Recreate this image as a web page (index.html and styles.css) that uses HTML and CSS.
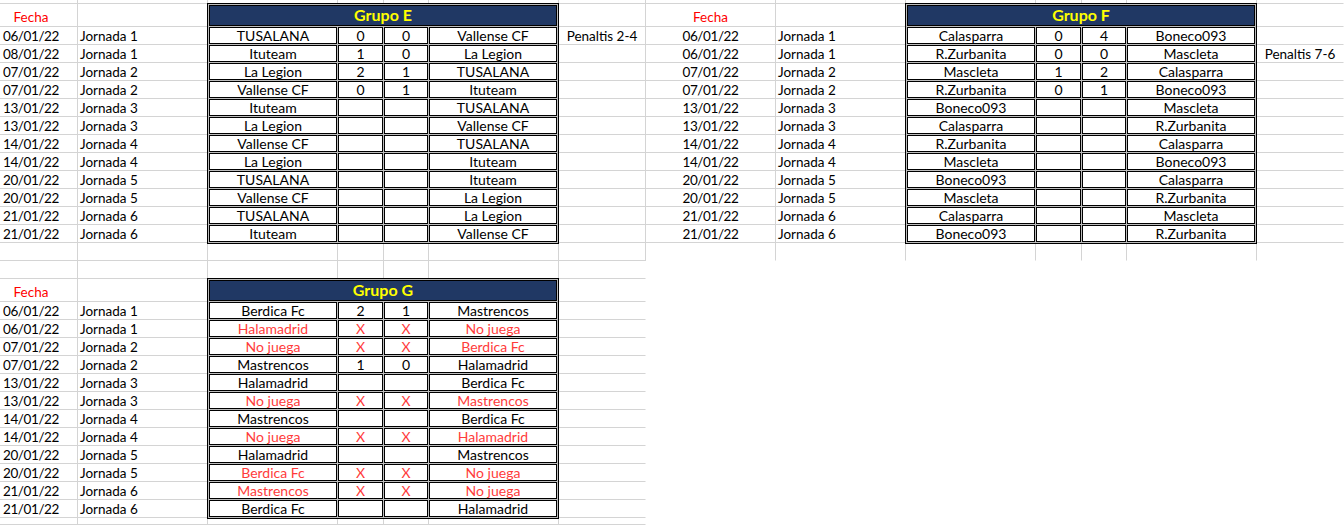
FILE: index.html
```html
<!DOCTYPE html>
<html lang="es">
<head>
<meta charset="utf-8">
<title>Grupos</title>
<link rel="stylesheet" href="styles.css">
</head>
<body>
<div class="page">
  <div class="panel left">
    <!-- row 1 (partial) -->
    <div class="cell"></div><div class="cell"></div><div class="cell"></div><div class="cell"></div><div class="cell"></div><div class="cell"></div><div class="cell"></div>
    <!-- row 2 header -->
    <div class="cell fh off">Fecha</div><div class="cell"></div><div class="cell"></div>
    <!-- rows 3-14 -->
    <div class="cell d off">06/01/22</div><div class="cell j">Jornada 1</div><div class="cell pen">Penaltis 2-4</div>
    <div class="cell d off">08/01/22</div><div class="cell j">Jornada 1</div><div class="cell"></div>
    <div class="cell d off">07/01/22</div><div class="cell j">Jornada 2</div><div class="cell"></div>
    <div class="cell d off">07/01/22</div><div class="cell j">Jornada 2</div><div class="cell"></div>
    <div class="cell d off">13/01/22</div><div class="cell j">Jornada 3</div><div class="cell"></div>
    <div class="cell d off">13/01/22</div><div class="cell j">Jornada 3</div><div class="cell"></div>
    <div class="cell d off">14/01/22</div><div class="cell j">Jornada 4</div><div class="cell"></div>
    <div class="cell d off">14/01/22</div><div class="cell j">Jornada 4</div><div class="cell"></div>
    <div class="cell d off">20/01/22</div><div class="cell j">Jornada 5</div><div class="cell"></div>
    <div class="cell d off">20/01/22</div><div class="cell j">Jornada 5</div><div class="cell"></div>
    <div class="cell d off">21/01/22</div><div class="cell j">Jornada 6</div><div class="cell"></div>
    <div class="cell d off">21/01/22</div><div class="cell j">Jornada 6</div><div class="cell"></div>
    <!-- row 15 -->
    <div class="cell"></div><div class="cell"></div><div class="cell"></div><div class="cell"></div><div class="cell"></div><div class="cell"></div><div class="cell"></div>
    <!-- row 16 -->
    <div class="cell"></div><div class="cell"></div><div class="cell"></div><div class="cell"></div><div class="cell"></div><div class="cell"></div><div class="cell nr"></div>
    <!-- row 17 header -->
    <div class="cell fh off">Fecha</div><div class="cell"></div><div class="cell nr"></div>
    <!-- rows 18-29 -->
    <div class="cell d off">06/01/22</div><div class="cell j">Jornada 1</div><div class="cell nr"></div>
    <div class="cell d off">06/01/22</div><div class="cell j">Jornada 1</div><div class="cell nr"></div>
    <div class="cell d off">07/01/22</div><div class="cell j">Jornada 2</div><div class="cell nr"></div>
    <div class="cell d off">07/01/22</div><div class="cell j">Jornada 2</div><div class="cell nr"></div>
    <div class="cell d off">13/01/22</div><div class="cell j">Jornada 3</div><div class="cell nr"></div>
    <div class="cell d off">13/01/22</div><div class="cell j">Jornada 3</div><div class="cell nr"></div>
    <div class="cell d off">14/01/22</div><div class="cell j">Jornada 4</div><div class="cell nr"></div>
    <div class="cell d off">14/01/22</div><div class="cell j">Jornada 4</div><div class="cell nr"></div>
    <div class="cell d off">20/01/22</div><div class="cell j">Jornada 5</div><div class="cell nr"></div>
    <div class="cell d off">20/01/22</div><div class="cell j">Jornada 5</div><div class="cell nr"></div>
    <div class="cell d off">21/01/22</div><div class="cell j">Jornada 6</div><div class="cell nr"></div>
    <div class="cell d off">21/01/22</div><div class="cell j">Jornada 6</div><div class="cell nr"></div>
    <!-- row 30 -->
    <div class="cell"></div><div class="cell"></div><div class="cell"></div><div class="cell"></div><div class="cell"></div><div class="cell"></div><div class="cell nr"></div>

    <div class="match-table top-table">
      <div class="grp">Grupo E</div>
      <div class="c">TUSALANA</div><div class="c">0</div><div class="c">0</div><div class="c">Vallense CF</div>
      <div class="c">Ituteam</div><div class="c">1</div><div class="c">0</div><div class="c">La Legion</div>
      <div class="c">La Legion</div><div class="c">2</div><div class="c">1</div><div class="c">TUSALANA</div>
      <div class="c">Vallense CF</div><div class="c">0</div><div class="c">1</div><div class="c">Ituteam</div>
      <div class="c">Ituteam</div><div class="c"></div><div class="c"></div><div class="c">TUSALANA</div>
      <div class="c">La Legion</div><div class="c"></div><div class="c"></div><div class="c">Vallense CF</div>
      <div class="c">Vallense CF</div><div class="c"></div><div class="c"></div><div class="c">TUSALANA</div>
      <div class="c">La Legion</div><div class="c"></div><div class="c"></div><div class="c">Ituteam</div>
      <div class="c">TUSALANA</div><div class="c"></div><div class="c"></div><div class="c">Ituteam</div>
      <div class="c">Vallense CF</div><div class="c"></div><div class="c"></div><div class="c">La Legion</div>
      <div class="c">TUSALANA</div><div class="c"></div><div class="c"></div><div class="c">La Legion</div>
      <div class="c">Ituteam</div><div class="c"></div><div class="c"></div><div class="c">Vallense CF</div>
    </div>

    <div class="match-table bottom-table">
      <div class="grp">Grupo G</div>
      <div class="c">Berdica Fc</div><div class="c">2</div><div class="c">1</div><div class="c">Mastrencos</div>
      <div class="c r">Halamadrid</div><div class="c r">X</div><div class="c r">X</div><div class="c r">No juega</div>
      <div class="c r">No juega</div><div class="c r">X</div><div class="c r">X</div><div class="c r">Berdica Fc</div>
      <div class="c">Mastrencos</div><div class="c">1</div><div class="c">0</div><div class="c">Halamadrid</div>
      <div class="c">Halamadrid</div><div class="c"></div><div class="c"></div><div class="c">Berdica Fc</div>
      <div class="c r">No juega</div><div class="c r">X</div><div class="c r">X</div><div class="c r">Mastrencos</div>
      <div class="c">Mastrencos</div><div class="c"></div><div class="c"></div><div class="c">Berdica Fc</div>
      <div class="c r">No juega</div><div class="c r">X</div><div class="c r">X</div><div class="c r">Halamadrid</div>
      <div class="c">Halamadrid</div><div class="c"></div><div class="c"></div><div class="c">Mastrencos</div>
      <div class="c r">Berdica Fc</div><div class="c r">X</div><div class="c r">X</div><div class="c r">No juega</div>
      <div class="c r">Mastrencos</div><div class="c r">X</div><div class="c r">X</div><div class="c r">No juega</div>
      <div class="c">Berdica Fc</div><div class="c"></div><div class="c"></div><div class="c">Halamadrid</div>
    </div>
  </div>

  <div class="panel right">
    <!-- row 1 -->
    <div class="cell"></div><div class="cell"></div><div class="cell"></div><div class="cell"></div><div class="cell"></div><div class="cell"></div><div class="cell nr"></div>
    <!-- row 2 -->
    <div class="cell fh">Fecha</div><div class="cell"></div><div class="cell nr"></div>
    <!-- rows 3-14 -->
    <div class="cell d">06/01/22</div><div class="cell j">Jornada 1</div><div class="cell nr"></div>
    <div class="cell d">06/01/22</div><div class="cell j">Jornada 1</div><div class="cell pen nr">Penaltis 7-6</div>
    <div class="cell d">07/01/22</div><div class="cell j">Jornada 2</div><div class="cell nr"></div>
    <div class="cell d">07/01/22</div><div class="cell j">Jornada 2</div><div class="cell nr"></div>
    <div class="cell d">13/01/22</div><div class="cell j">Jornada 3</div><div class="cell nr"></div>
    <div class="cell d">13/01/22</div><div class="cell j">Jornada 3</div><div class="cell nr"></div>
    <div class="cell d">14/01/22</div><div class="cell j">Jornada 4</div><div class="cell nr"></div>
    <div class="cell d">14/01/22</div><div class="cell j">Jornada 4</div><div class="cell nr"></div>
    <div class="cell d">20/01/22</div><div class="cell j">Jornada 5</div><div class="cell nr"></div>
    <div class="cell d">20/01/22</div><div class="cell j">Jornada 5</div><div class="cell nr"></div>
    <div class="cell d">21/01/22</div><div class="cell j">Jornada 6</div><div class="cell nr"></div>
    <div class="cell d">21/01/22</div><div class="cell j">Jornada 6</div><div class="cell nr"></div>
    <!-- row 15 (cut) -->
    <div class="cell nb"></div><div class="cell nb"></div><div class="cell nb"></div><div class="cell nb"></div><div class="cell nb"></div><div class="cell nb"></div><div class="cell nb nr"></div>

    <div class="match-table top-table">
      <div class="grp">Grupo F</div>
      <div class="c">Calasparra</div><div class="c">0</div><div class="c">4</div><div class="c">Boneco093</div>
      <div class="c">R.Zurbanita</div><div class="c">0</div><div class="c">0</div><div class="c">Mascleta</div>
      <div class="c">Mascleta</div><div class="c">1</div><div class="c">2</div><div class="c">Calasparra</div>
      <div class="c">R.Zurbanita</div><div class="c">0</div><div class="c">1</div><div class="c">Boneco093</div>
      <div class="c">Boneco093</div><div class="c"></div><div class="c"></div><div class="c">Mascleta</div>
      <div class="c">Calasparra</div><div class="c"></div><div class="c"></div><div class="c">R.Zurbanita</div>
      <div class="c">R.Zurbanita</div><div class="c"></div><div class="c"></div><div class="c">Calasparra</div>
      <div class="c">Mascleta</div><div class="c"></div><div class="c"></div><div class="c">Boneco093</div>
      <div class="c">Boneco093</div><div class="c"></div><div class="c"></div><div class="c">Calasparra</div>
      <div class="c">Mascleta</div><div class="c"></div><div class="c"></div><div class="c">R.Zurbanita</div>
      <div class="c">Calasparra</div><div class="c"></div><div class="c"></div><div class="c">Mascleta</div>
      <div class="c">Boneco093</div><div class="c"></div><div class="c"></div><div class="c">R.Zurbanita</div>
    </div>
  </div>
</div>
</body>
</html>
```
FILE: styles.css
```css
* { box-sizing: border-box; }
html, body { margin: 0; padding: 0; background: #fff; }
body {
  font-family: Lato, "Liberation Sans", sans-serif;
  font-size: 13.5px;
  color: #000;
  width: 1344px;
  height: 525px;
  overflow: hidden;
}
.page {
  display: flex;
  align-items: flex-start;
}
.panel { display: grid; }
.left {
  width: 646px;
  grid-template-columns: 78px 130px 130px 46px 45px 130px 87px;
  grid-template-rows: 4px 23px repeat(12, 18px) 18px 18px 23px repeat(12, 18px) 7px;
}
.right {
  width: 698px;
  grid-template-columns: 130px 130px 130px 46px 45px 130px 87px;
  grid-template-rows: 4px 23px repeat(12, 18px) 18px;
}
.cell {
  border-right: 1px solid #d4d4d4;
  border-bottom: 1px solid #d4d4d4;
  padding-top: 1px;
  line-height: 17px;
  white-space: nowrap;
  overflow: hidden;
}
.cell.nr { border-right-color: transparent; }
.cell.nb { border-bottom-color: transparent; }
.d { text-align: center; letter-spacing: -0.4px; }
.off { padding-right: 15px; }
.j { padding-left: 2px; }
.fh { color: #ff0000; text-align: center; line-height: 23px; padding-top: 2px; }
.pen { text-align: center; }

.match-table {
  display: grid;
  grid-template-columns: 128px 45px 44px 128px;
  grid-template-rows: 21px repeat(12, 17px);
  gap: 1px;
  padding: 1px;
  border: 1px solid #000;
  background: #bdbdbd;
  margin: -1px 0 -1px -1px;
  grid-column: 3 / 7;
  position: relative;
  z-index: 1;
}
.top-table { grid-row: 2 / 15; }
.bottom-table { grid-row: 17 / 30; }
.grp {
  grid-column: 1 / -1;
  background: #203864;
  border: 1px solid #000;
  color: #ffff00;
  font-weight: bold;
  font-size: 16px;
  line-height: 17px;
  text-align: center;
}
.c {
  background: #fff;
  border: 1px solid #000;
  text-align: center;
  font-size: 14px;
  line-height: 15px;
  white-space: nowrap;
  overflow: hidden;
}
.c.r { color: #ff3b3b; }
```
